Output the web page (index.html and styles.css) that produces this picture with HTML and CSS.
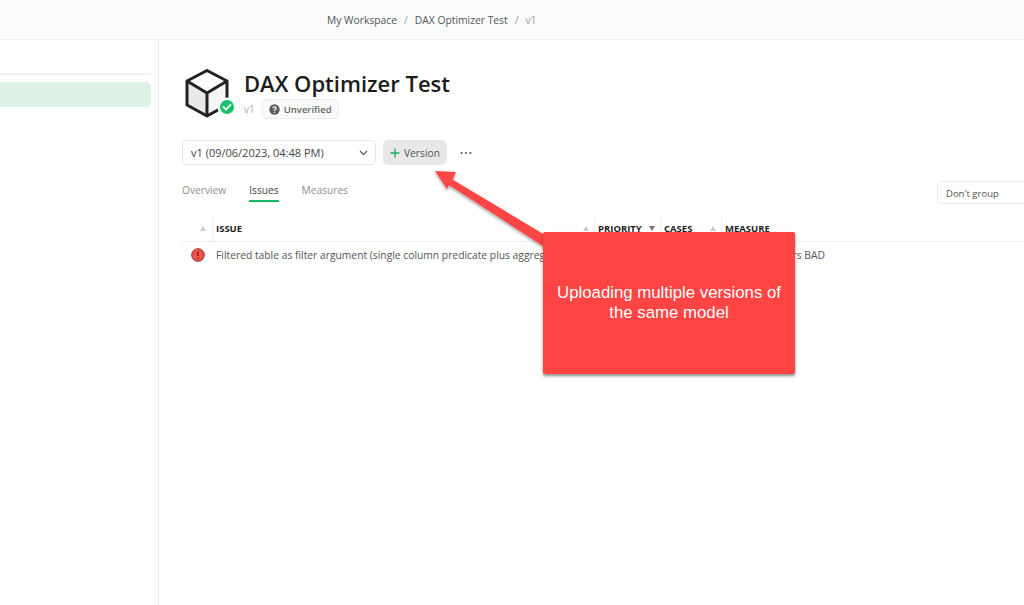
FILE: index.html
```html
<!DOCTYPE html>
<html lang="en">
<head>
<meta charset="utf-8">
<title>DAX Optimizer Test</title>
<link rel="stylesheet" href="styles.css">
</head>
<body>
<header class="topbar">
  <nav class="crumbs">
    <span>My Workspace</span><span class="sep">/</span><span>DAX Optimizer Test</span><span class="sep">/</span><span class="crumb-last">v1</span>
  </nav>
</header>
<div class="shell">
  <aside class="sidebar">
    <div class="side-rule"></div>
    <div class="side-item"></div>
  </aside>
  <main class="main">
    <section class="title-block">
      <svg class="model-icon" width="50" height="50" viewBox="0 0 50 50">
        <path d="M3 12 L23 1.500 L43 12 L23 24 Z" fill="#fff"/>
        <path d="M3 12 L23 24 V47 L3 36 Z" fill="#e9e9e9"/>
        <path d="M23 24 L43 12 V36 L23 47 Z" fill="#f6f6f6"/>
        <path d="M23 1.500 L43 12 V36 L23 47 L3 36 V12 Z M3 12 L23 24 L43 12 M23 24 V47" fill="none" stroke="#222" stroke-width="3" stroke-linejoin="round"/>
        <circle cx="43" cy="38" r="9.500" fill="#fff"/>
        <circle cx="43" cy="38" r="7" fill="#17c26b"/>
        <path d="M39.500 38 L42 40.500 L46.500 35.800" fill="none" stroke="#fff" stroke-width="1.800" stroke-linecap="round" stroke-linejoin="round"/>
      </svg>
      <div class="title-text">
        <h1>DAX Optimizer Test</h1>
        <div class="meta">
          <span class="ver">v1</span>
          <span class="badge">
            <svg width="11" height="11" viewBox="0 0 11 11"><circle cx="5.500" cy="5.500" r="5.200" fill="#5c5c5c"/><path d="M3.900 4.300 A1.600 1.500 0 1 1 5.500 5.900 V6.500" fill="none" stroke="#fff" stroke-width="1.200"/><circle cx="5.500" cy="8.300" r=".7" fill="#fff"/></svg>
            Unverified
          </span>
        </div>
      </div>
    </section>
    <section class="toolbar">
      <div class="select">
        <span>v1 (09/06/2023, 04:48 PM)</span>
        <svg width="9" height="6" viewBox="0 0 9 6"><path d="M1 1 L4.500 4.500 L8 1" fill="none" stroke="#555" stroke-width="1.200"/></svg>
      </div>
      <button class="btn">
        <svg width="10" height="10" viewBox="0 0 10 10"><path d="M5 .5 V9.500 M.5 5 H9.500" stroke="#17a960" stroke-width="1.300"/></svg>
        Version
      </button>
      <svg class="more" width="12" height="4" viewBox="0 0 12 4"><circle cx="1.500" cy="2" r="1" fill="#555"/><circle cx="6" cy="2" r="1" fill="#555"/><circle cx="10.500" cy="2" r="1" fill="#555"/></svg>
    </section>
    <section class="tabrow">
      <div class="tabs">
        <span class="tab">Overview</span>
        <span class="tab active">Issues</span>
        <span class="tab">Measures</span>
      </div>
      <div class="group">Don't group</div>
    </section>
    <section class="table">
      <div class="row head">
        <div class="c c-sort"><i class="tri"></i></div>
        <div class="c c-issue"><b>ISSUE</b><i class="tri"></i></div>
        <div class="c c-pri"><b>PRIORITY</b><i class="tri down"></i></div>
        <div class="c c-cases"><b>CASES</b><i class="tri"></i></div>
        <div class="c c-meas"><b>MEASURE</b></div>
      </div>
      <div class="row body">
        <div class="c c-sort">
          <svg width="14" height="14" viewBox="0 0 14 14"><circle cx="7" cy="7" r="6.300" fill="#f0544a" stroke="#8f2f2a" stroke-width="1"/><path d="M7 3.500 V8" stroke="#7a1f1b" stroke-width="1.400"/><circle cx="7" cy="10.200" r=".8" fill="#7a1f1b"/></svg>
        </div>
        <div class="c c-issue">Filtered table as filter argument (single column predicate plus aggregation)</div>
        <div class="c c-pri"></div>
        <div class="c c-cases"></div>
        <div class="c c-meas">Net Sales Filters BAD</div>
      </div>
    </section>
  </main>
</div>
<svg class="arrow" width="140" height="90" viewBox="0 0 140 90">
  <defs><filter id="ds" x="-20%" y="-20%" width="140%" height="140%"><feDropShadow dx="0" dy="2" stdDeviation="1.500" flood-color="#000" flood-opacity=".35"/></filter></defs>
  <path d="M4 3 L25 4 L21.500 11.500 L119 70 L112 78 L18 17 L16 21 Z" fill="#ff4444" filter="url(#ds)"/>
</svg>
<div class="callout">Uploading multiple versions of the same model</div>
</body>
</html>
```
FILE: styles.css
```css
* { box-sizing: border-box; }
html, body { height: 100%; }
body {
  margin: 0;
  font-family: "Open Sans", "Noto Sans", sans-serif;
  color: #333;
  background: #fff;
  overflow: hidden;
  display: flex;
  flex-direction: column;
}
.topbar {
  height: 40px;
  flex: none;
  background: #fafbfd;
  border-bottom: 1px solid #ececec;
  display: flex;
  align-items: center;
  padding-left: 327px;
}
.crumbs { font-size: 10.300px; color: #555; display: flex; gap: 7px; }
.sep, .crumb-last { color: #999; }
.shell { flex: 1; display: flex; min-height: 0; }
.sidebar {
  width: 159px;
  flex: none;
  border-right: 1px solid #ececec;
  padding: 33px 7px 0 0;
}
.side-rule { height: 2px; background: #f2f2f2; }
.side-item {
  height: 25px;
  margin-top: 7px;
  background: #dcf3e6;
  border-radius: 0 5px 5px 0;
}
.main { flex: 1; min-width: 0; padding: 29px 0 0 23px; overflow: hidden; }
.title-block { display: flex; align-items: flex-start; gap: 10px; margin-left: 2px; }
.model-icon { flex: none; }
.title-text { display: flex; flex-direction: column; }
h1 { margin: -1px 0 1px; font-size: 22px; line-height: 30px; font-weight: 600; color: #1c1c1c; }
.meta { display: flex; align-items: center; gap: 7px; margin-top: 0; }
.ver { font-size: 10px; color: #aaa; }
.badge {
  display: inline-flex; align-items: center; gap: 4px;
  height: 20px; padding: 0 6px;
  font-size: 9.500px; font-weight: 600; color: #666;
  background: #fafafa; border: 1px solid #ececec; border-radius: 5px;
}
.toolbar { display: flex; align-items: center; margin-top: 21px; }
.select {
  width: 194px; height: 25px;
  display: flex; align-items: center; justify-content: space-between;
  padding: 0 7px 0 8px;
  font-size: 11px; color: #444;
  border: 1px solid #e6e6e6; border-radius: 5px;
}
.btn {
  margin-left: 7px; width: 64px; height: 25px;
  border: 0; border-radius: 5px; background: #e8e8e8;
  font: 10.300px "Open Sans", sans-serif; color: #555;
  display: flex; align-items: center; justify-content: center; gap: 4px; padding: 0;
}
.more { margin-left: 13px; flex: none; }
.tabrow { display: flex; justify-content: space-between; align-items: flex-start; margin-top: 13px; }
.tabs { display: flex; gap: 23px; margin-top: 5px; }
.tab { font-size: 10.200px; color: #8f8f8f; padding-bottom: 4px; line-height: 15px; }
.tab.active { color: #444; box-shadow: inset 0 -2px 0 #10b765; }
.group {
  width: 87px; height: 23px; margin-top: 3px; flex: none;
  padding-left: 8px; font-size: 9.500px; line-height: 23px; color: #555;
  border: 1px solid #ececec; border-right: 0; border-radius: 5px 0 0 5px;
}
.table { margin-top: 12px; }
.row { display: flex; align-items: center; }
.head { height: 26px; border-bottom: 1px solid #eee; }
.body { height: 26px; font-size: 10.300px; color: #555; }
.c { display: flex; align-items: center; height: 100%; padding-left: 3px; flex: none; white-space: nowrap; overflow: hidden; }
.head .c { border-left: 1px solid #f0f0f0; justify-content: space-between; padding-right: 5px; }
.head .c-sort { border-left: 0; justify-content: center; padding: 0 0 0 12px; }
.body .c-sort { justify-content: center; padding: 0 0 0 1px; }
.body .c-issue { padding-left: 4px; }
.body .c-meas { justify-content: flex-end; padding-right: 96px; }
.c-sort { width: 30px; }
.c-issue { width: 382px; }
.c-pri { width: 66px; }
.c-cases { width: 61px; }
.c-meas { width: 200px; }
.head b { font-size: 9.500px; font-weight: 700; color: #222; }
.tri { width: 0; height: 0; border: 3.500px solid transparent; border-top: 0; border-bottom: 5px solid #ccc; }
.tri.down { border-bottom: 0; border-top: 5px solid #777; }
.arrow { position: absolute; left: 431px; top: 168px; }
.callout {
  position: absolute; left: 543px; top: 232px;
  width: 252px; height: 142px;
  display: flex; align-items: center; justify-content: center; text-align: center;
  padding: 0 12px 1px;
  font: 16.800px/20px "Liberation Sans", Arial, sans-serif; color: #fff;
  background: #ff4444; border-radius: 2px;
  box-shadow: 0 2px 3px rgba(0,0,0,.45);
}
```
